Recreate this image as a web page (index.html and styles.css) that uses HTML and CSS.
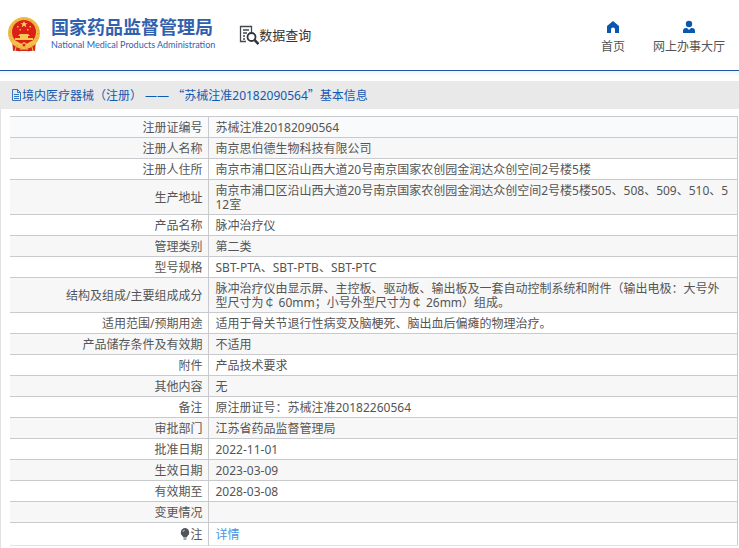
FILE: index.html
```html
<!DOCTYPE html>
<html lang="zh-CN">
<head>
  <meta charset="utf-8">
  <title>国家药品监督管理局 数据查询</title>
  <link rel="stylesheet" href="styles.css">
</head>
<body>
  <header class="header">
    <a class="logo" href="#">
      <svg class="emblem" viewBox="0 0 32 35" aria-hidden="true">
        <path d="M4 22l1 12c3-1 5 1 8 0h6c3 1 5-1 8 0l1-12z" fill="#d8271c"/>
        <circle cx="16" cy="16" r="16" fill="#efbd45"/>
        <circle cx="16" cy="16" r="14" fill="none" stroke="#dfa13a" stroke-width="1" stroke-dasharray="2 2"/>
        <circle cx="16" cy="15" r="12" fill="#dc2018"/>
        <path d="M16 4l1 2.300h2.500l-2 1.500.8 2.500-2.300-1.500-2.300 1.500.8-2.500-2-1.500H15z" fill="#f8d75c"/>
        <path d="M9 9h1.500v1.500H9zM11.500 12H13v1.500h-1.500zM19 12h1.500v1.500H19zM21.500 9H23v1.500h-1.500z" fill="#f2b640"/>
        <path d="M12 17h8l2 2h-2v2h5v2H7v-2h5v-2h-2z" fill="#f5ca50"/>
        <path d="M4 24c5 0 7 1 9 3l3-2 3 2c2-2 4-3 9-3l-1 3c-4 0-5 1-7 3l-4-2-4 2c-2-2-3-3-7-3z" fill="#f3c14c"/>
        <circle cx="16" cy="28" r="2" fill="#dc2018" stroke="#f3c14c"/>
        <path d="M8 30l-1 4M24 30l1 4M12 32h8" stroke="#f3c14c" fill="none"/>
      </svg>
      <span class="logo-text">
        <span class="logo-cn">国家药品监督管理局</span>
        <span class="logo-en">National Medical Products Administration</span>
      </span>
    </a>
    <a class="query" href="#">
      <svg class="query-icon" viewBox="0 0 20 20" aria-hidden="true">
        <path d="M7 16.500H1.500V1.500h11V7M4 5h6M4 8h4M4 11h2M4 14h2" fill="none" stroke="#444952" stroke-width="1.300"/>
        <circle cx="12.500" cy="12" r="4" fill="#fff" stroke="#30343e" stroke-width="1.800"/>
        <path d="M15.500 15l4 4" stroke="#30343e" stroke-width="2.500"/>
      </svg>
      <span>数据查询</span>
    </a>
    <nav class="nav">
      <a href="#">
        <svg viewBox="0 0 14 14" aria-hidden="true"><path d="M7 1l6 5v7H9V9.500a2 2 0 0 0-4 0V13H1V6z" fill="#0b57b0"/></svg>
        <span>首页</span>
      </a>
      <a href="#">
        <svg viewBox="0 0 14 14" aria-hidden="true"><circle cx="7" cy="4" r="3.200" fill="#0b57b0"/><path d="M1 13v-2c0-2 1-3 3-3h1l2 2 2-2h1c2 0 3 1 3 3v2z" fill="#0b57b0"/></svg>
        <span>网上办事大厅</span>
      </a>
    </nav>
  </header>

  <div class="stripes"></div>

  <h1 class="title">
    <svg class="doc-icon" viewBox="0 0 11 12" aria-hidden="true"><path d="M1.500.5h5l3 3v8h-8zM6.500.5v3h3M3 5.500h5M3 7.500h5M3 9.500h5" fill="none" stroke="#3977bd"/></svg>
    <span>境内医疗器械（注册） —— <span class="quote">“</span>苏械注准20182090564<span class="quote">”</span>基本信息</span>
  </h1>

  <main class="content">
    <table class="detail">
      <tbody>
        <tr><th scope="row">注册证编号</th><td>苏械注准20182090564</td></tr>
        <tr><th scope="row">注册人名称</th><td>南京思伯德生物科技有限公司</td></tr>
        <tr><th scope="row">注册人住所</th><td>南京市浦口区沿山西大道20号南京国家农创园金润达众创空间2号楼5楼</td></tr>
        <tr><th scope="row">生产地址</th><td>南京市浦口区沿山西大道20号南京国家农创园金润达众创空间2号楼5楼505、508、509、510、512室</td></tr>
        <tr><th scope="row">产品名称</th><td>脉冲治疗仪</td></tr>
        <tr><th scope="row">管理类别</th><td>第二类</td></tr>
        <tr><th scope="row">型号规格</th><td>SBT-PTA、SBT-PTB、SBT-PTC</td></tr>
        <tr><th scope="row">结构及组成/主要组成成分</th><td>脉冲治疗仪由显示屏、主控板、驱动板、输出板及一套自动控制系统和附件（输出电极：大号外型尺寸为￠ 60mm；小号外型尺寸为￠ 26mm）组成。</td></tr>
        <tr><th scope="row">适用范围/预期用途</th><td>适用于骨关节退行性病变及脑梗死、脑出血后偏瘫的物理治疗。</td></tr>
        <tr><th scope="row">产品储存条件及有效期</th><td>不适用</td></tr>
        <tr><th scope="row">附件</th><td>产品技术要求</td></tr>
        <tr><th scope="row">其他内容</th><td>无</td></tr>
        <tr><th scope="row">备注</th><td>原注册证号：苏械注准20182260564</td></tr>
        <tr><th scope="row">审批部门</th><td>江苏省药品监督管理局</td></tr>
        <tr><th scope="row">批准日期</th><td>2022-11-01</td></tr>
        <tr><th scope="row">生效日期</th><td>2023-03-09</td></tr>
        <tr><th scope="row">有效期至</th><td>2028-03-08</td></tr>
        <tr><th scope="row">变更情况</th><td></td></tr>
        <tr class="note">
          <th scope="row"><svg class="bulb" viewBox="0 0 10 12" aria-hidden="true"><path d="M5 0a4.500 4.500 0 0 1 2.500 8L6.500 9.500h-3L2.500 8A4.500 4.500 0 0 1 5 0zM3.500 10.500h3v1h-3z" fill="#4f555b"/><path d="M3 4a2 2 0 0 1 2-2" stroke="#b5b5b5" fill="none"/></svg>注</th>
          <td><a href="#">详情</a></td>
        </tr>
      </tbody>
    </table>
  </main>
</body>
</html>
```
FILE: styles.css
```css
* {
  box-sizing: border-box;
}

body {
  margin: 0;
  font-family: "Noto Sans", "Noto Sans CJK SC", sans-serif;
  font-size: 12px;
  line-height: 14px;
  color: #555;
  background: #fff;
}

a {
  color: inherit;
  text-decoration: none;
}

svg {
  display: block;
}

.header {
  display: flex;
  align-items: center;
  height: 71px;
  padding: 0 14px 2px 8px;
  border-bottom: 1px solid #1d57a5;
}

.logo {
  display: flex;
  align-items: center;
  gap: 11px;
  color: #3161ae;
}

.emblem {
  width: 32px;
  height: 35px;
}

.logo-text {
  display: flex;
  flex-direction: column;
  gap: 2px;
}

.logo-cn {
  font-size: 18px;
  font-weight: bold;
  line-height: 20px;
}

.logo-en {
  font-family: Lato, sans-serif;
  font-size: 9px;
  line-height: 12px;
}

.query {
  display: flex;
  align-items: center;
  margin-left: 24px;
  padding-top: 2px;
  font-size: 13px;
  color: #333;
}

.query-icon {
  width: 20px;
  height: 20px;
}

.nav {
  display: flex;
  gap: 28px;
  margin-left: auto;
  padding-top: 6px;
}

.nav a {
  display: flex;
  flex-direction: column;
  align-items: center;
  gap: 6px;
}

.nav svg {
  width: 14px;
  height: 14px;
}

.stripes {
  height: 10px;
  background: linear-gradient(#f1f5fa, #fff 6px);
}

.title {
  display: flex;
  align-items: center;
  height: 28px;
  margin: 0;
  padding: 0 11px;
  background: #e9e9e9;
  font-size: 12px;
  font-weight: normal;
  color: #1259b4;
}

.quote {
  font-family: "Noto Sans CJK SC", sans-serif;
}

.doc-icon {
  width: 11px;
  height: 12px;
}

.content {
  padding: 7px 1px 2px 9px;
  border-left: 1px solid #e2e2e2;
}

.detail {
  width: 100%;
  border-collapse: collapse;
  border-right: 1px solid #c9cacd;
}

.detail th,
.detail td {
  padding: 4px 7px 2px;
  border-top: 1px solid #c9cacd;
  font-weight: normal;
  text-align: left;
  word-break: break-all;
}

.detail th {
  width: 198px;
  padding-right: 5px;
  border-right: 1px solid #c9cacd;
  text-align: right;
}

.detail tr:nth-child(even) {
  background: #f7f7f7;
}

.detail tr:first-child {
  background: #f9fafc;
}

.detail .note {
  height: 23px;
  border-bottom: 1px solid #e2e2e2;
}

.note a {
  color: #4596e5;
}

.bulb {
  display: inline-block;
  width: 10px;
  height: 12px;
  vertical-align: -1px;
}
```
